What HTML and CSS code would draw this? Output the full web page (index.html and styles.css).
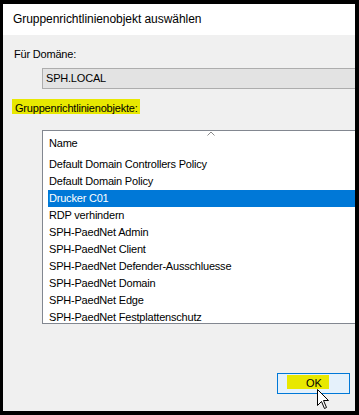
FILE: index.html
```html
<!DOCTYPE html>
<html lang="de">
<head>
<meta charset="utf-8">
<title>Gruppenrichtlinienobjekt auswählen</title>
<link rel="stylesheet" href="styles.css">
</head>
<body>
<div class="window">
  <div class="titlebar">Gruppenrichtlinienobjekt auswählen</div>
  <div class="content">
    <div class="label domain-label">Für Domäne:</div>
    <div class="domain-box">SPH.LOCAL</div>
    <div class="label gpo-label"><span class="hl gpo-hl">Gruppenrichtlinienobjekte:</span></div>
    <div class="list">
      <div class="list-header">
        <span class="col-name">Name</span>
        <svg class="sort" width="8" height="5" viewBox="0 0 8 5"><path d="M0.5 4.5 L4 1 L7.5 4.5" fill="none" stroke="#8a8a8a" stroke-width="1"/></svg>
      </div>
      <div class="rows">
        <div class="row">Default Domain Controllers Policy</div>
        <div class="row">Default Domain Policy</div>
        <div class="row selected">Drucker C01</div>
        <div class="row">RDP verhindern</div>
        <div class="row">SPH-PaedNet Admin</div>
        <div class="row">SPH-PaedNet Client</div>
        <div class="row">SPH-PaedNet Defender-Ausschluesse</div>
        <div class="row">SPH-PaedNet Domain</div>
        <div class="row">SPH-PaedNet Edge</div>
        <div class="row">SPH-PaedNet Festplattenschutz</div>
      </div>
    </div>
    <div class="buttons">
      <button class="ok" type="button"><span class="hl ok-hl">OK</span></button>
    </div>
  </div>
  <svg class="cursor" width="13" height="21" viewBox="0 0 13 21"><path d="M0.5 0.5 L0.5 16.5 L4.5 12.5 L7.5 19.5 L9.5 18.5 L6.5 11.5 L11.5 11.5 Z" fill="#fff" stroke="#000" stroke-width="1" stroke-linejoin="miter"/></svg>
</div>
</body>
</html>
```

FILE: styles.css
```css
html, body {
  margin: 0;
  padding: 0;
}
body {
  background: #000;
  width: 359px;
  height: 415px;
  box-sizing: border-box;
  padding: 4px 4px 4px 3px;
  font-family: "Liberation Sans", Arial, sans-serif;
  font-size: 11px;
  color: #000;
}
.window {
  position: relative;
  width: 352px;
  height: 407px;
  overflow: hidden;
  background: #f0f0f0;
}
.titlebar {
  height: 31px;
  line-height: 31px;
  background: #fff;
  padding-left: 10px;
  font-size: 12px;
  letter-spacing: -0.05px;
}
.content {
  display: flex;
  flex-direction: column;
  align-items: flex-start;
  letter-spacing: -0.2px;
}
.label {
  line-height: 15px;
  white-space: nowrap;
}
.domain-label {
  margin: 12px 0 0 11px;
}
.domain-box {
  margin: 6px 0 0 39px;
  width: 400px;
  height: 19px;
  line-height: 19px;
  border: 1px solid #adadad;
  background: #e3e3e3;
  padding-left: 3px;
  flex-shrink: 0;
}
.hl {
  background: #e8e800;
  display: inline-block;
  box-sizing: border-box;
}
.gpo-label {
  margin: 10px 0 0 9px;
}
.gpo-hl {
  height: 15px;
  width: 128px;
  padding: 2px 0 0 3px;
  line-height: 15px;
  overflow: visible;
}
.list {
  margin: 14px 0 0 39px;
  width: 400px;
  height: 192px;
  border: 1px solid #828790;
  background: #fff;
  overflow: hidden;
  flex-shrink: 0;
}
.list-header {
  position: relative;
  height: 25px;
  line-height: 25px;
  padding-left: 6px;
}
.sort {
  position: absolute;
  left: 164px;
  top: 0px;
}
.row {
  height: 17px;
  line-height: 17px;
  margin-left: 5px;
  padding-left: 1px;
  white-space: nowrap;
}
.row.selected {
  background: #0078d7;
  color: #fff;
}
.buttons {
  align-self: stretch;
  display: flex;
  justify-content: flex-end;
  margin-top: 49px;
  padding-right: 5px;
}
.ok {
  width: 73px;
  height: 21px;
  box-sizing: border-box;
  border: 1px solid #0078d7;
  background: #e5f1fb;
  padding: 1px 0 0 9px;
  margin: 0;
  display: flex;
  align-items: flex-start;
  font-family: inherit;
  font-size: 11px;
  color: #000;
}
.ok-hl {
  width: 42px;
  height: 14px;
  padding: 2px 9px 0 19px;
  line-height: 12px;
  text-align: left;
}
.cursor {
  position: absolute;
  left: 314px;
  top: 385px;
}
```
